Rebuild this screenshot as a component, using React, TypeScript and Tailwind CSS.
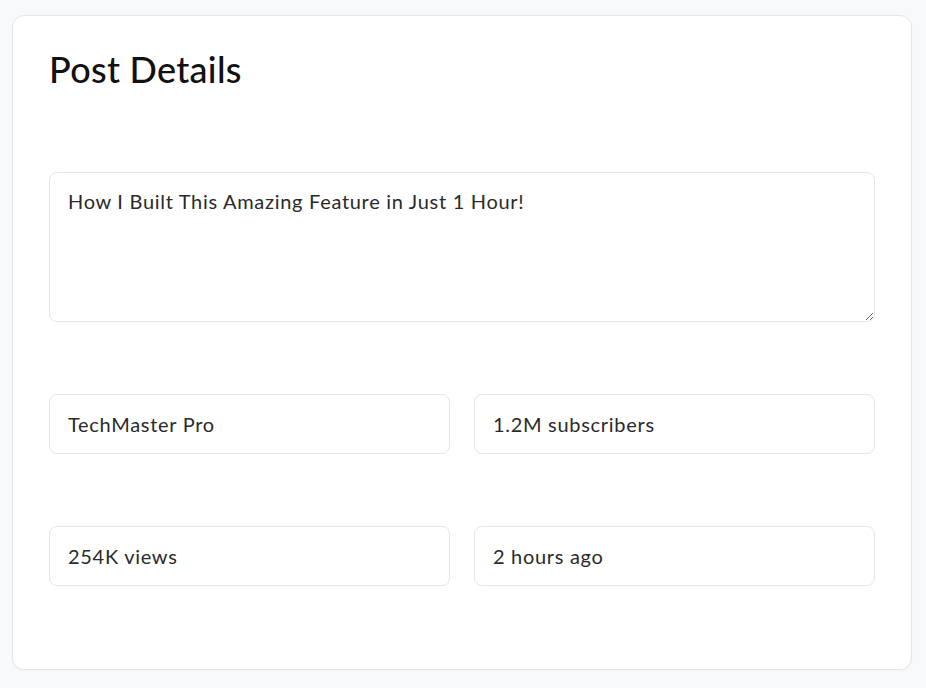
export default function App() {
  return (
    <div className="min-h-screen bg-[#f8f9fb] px-3 pt-[15px] font-['Lato','Noto_Sans',sans-serif] text-[#1a1a1a]">
      <div className="flex w-[900px] flex-col gap-[72px] rounded-xl border border-[#e4e5e8] bg-white px-9 pt-9 pb-[83px] shadow-[0_1px_2px_rgba(0,0,0,0.03)]">
        <h2 className="h-12 text-[36px] leading-[34px] font-medium tracking-[0.3px] text-[#111]">Post Details</h2>

        <textarea
          defaultValue="How I Built This Amazing Feature in Just 1 Hour!"
          className="block h-[150px] w-full rounded-lg border border-[#e4e5e8] px-[18px] py-[14px] text-[20px] leading-7 tracking-[0.7px] text-[#2a2a2a] outline-none"
        />

        <div className="grid grid-cols-2 gap-x-6">
          <Field value="TechMaster Pro" />
          <Field value="1.2M subscribers" />
        </div>

        <div className="grid grid-cols-2 gap-x-6">
          <Field value="254K views" />
          <Field value="2 hours ago" />
        </div>
      </div>
    </div>
  );
}

function Field({ value }: { value: string }) {
  return (
    <input
      defaultValue={value}
      className="block h-[60px] w-full rounded-lg border border-[#e4e5e8] px-[18px] text-[20px] tracking-[0.7px] text-[#2a2a2a] outline-none"
    />
  );
}
